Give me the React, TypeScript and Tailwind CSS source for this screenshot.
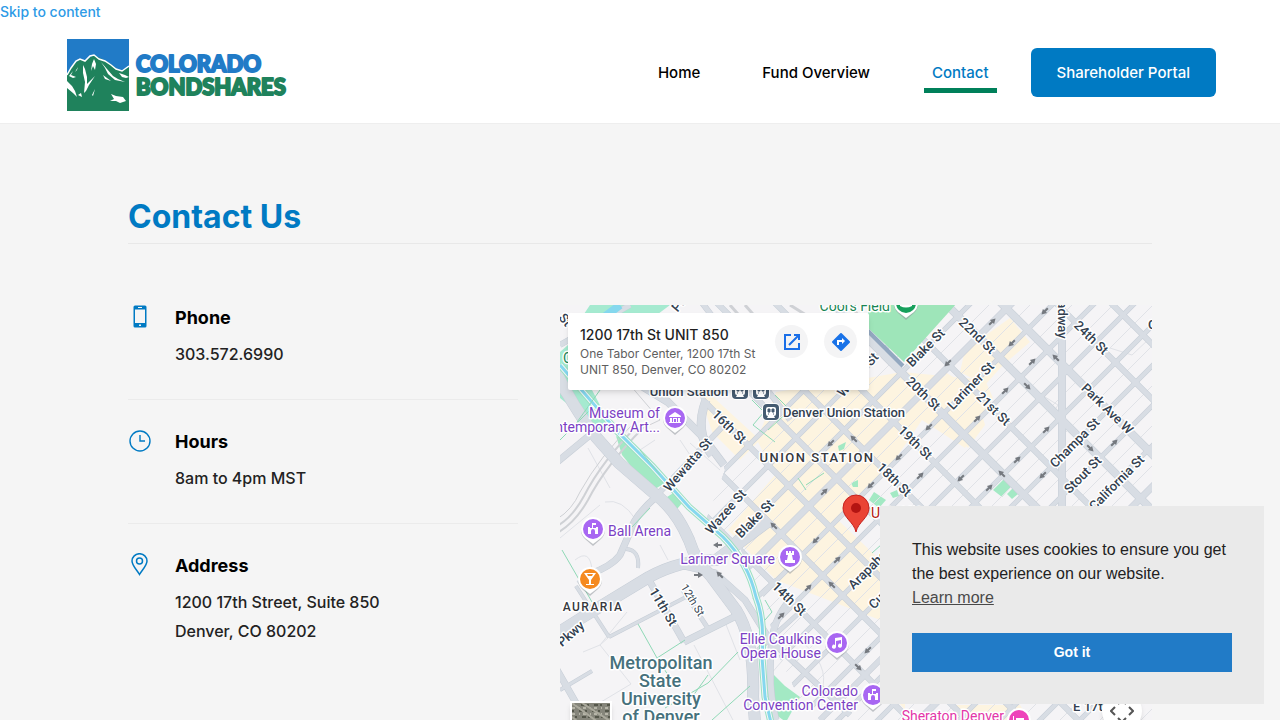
import { ReactNode } from "react";

type Line = { d: string; w: number };
type Label = {
  text: string;
  x: number;
  y: number;
  rotate?: number;
};

const BLUE = "#007ac3";

/* Numbered streets run down-right, named streets run up-right. */
const NUMBERED = [808, 753, 698, 642, 584, 529, 472, 414, 358, 303, 247, 190];
const NAMED = [
  1194, 1234, 1274, 1315, 1357, 1398, 1438, 1478, 1518, 1558, 1598, 1639, 1679,
  1720, 1760, 1800, 1841, 1881,
];
const WIDE = [698, 642, 529, 1315, 1639];

const CREEK =
  "M560 365 L616 430 L653 467 L689 507 L723 537 Q748 562 756 597 Q765 620 762 657 L765 697 L775 740";

const STREETS: Line[] = [
  { d: "M556 372 Q572 405 596 437 L619 463 L656 495 Q676 510 689 540 Q696 562 710 575 L736 610 Q755 640 753 697 L758 760", w: 11 },
  { d: "M560 388 L585 420 L619 463", w: 6 },
  { d: "M556 634 L583 617 L649 577 Q680 560 716 560 L770 520", w: 11 },
  { d: "M680 565 L715 573 L745 600 L776 650", w: 6 },
  { d: "M556 463 L596 430", w: 6 },
  { d: "M656 497 Q634 516 630 532 L620 555 Q612 566 590 574 L579 584", w: 6 },
  { d: "M626 549 Q640 550 638 568", w: 3 },
  { d: "M649 580 L684 642", w: 6 },
  { d: "M683 590 L709 630", w: 4 },
  { d: "M609 637 L686 597", w: 3 },
  { d: "M684 642 L740 614", w: 6 },
  { d: "M576 586 L609 637", w: 3 },
  { d: "M556 668 L580 710 L590 730", w: 6 },
  { d: "M560 690 L592 671", w: 3 },
  { d: "M632 380 L668 402 L703 437 L724 465", w: 7 },
  { d: "M706 400 Q694 432 712 455", w: 8 },
  { d: "M655 497 L724 425", w: 5 },
  { d: "M754 600 L776 580 M758 650 L800 612", w: 4 },
  { d: "M776 720 Q768 690 771 650 Q772 620 790 600", w: 6 },
  { d: "M770 640 L850 715 M820 720 L900 640", w: 5 },
  { d: "M1062 300 L1062 506", w: 7 },
  { d: "M630 305 L560 345 M700 300 L790 420", w: 5 },
];

const PARCELS =
  "M583 652 L600 645 L631 684 L596 705 M600 645 L609 637 M600 645 L627 612 M694 645 L735 724 M725 622 L740 660 M1110 348 L1132 355 L1150 338 M1045 397 L1058 405 L1052 414 M605 502 Q622 498 636 520 M575 560 Q590 548 592 570 M600 505 L560 538 M588 448 L610 488 M690 443 L720 470 M680 440 L690 455 M660 545 L668 560 M640 450 L655 440 M770 675 L800 640 M800 640 Q830 665 822 690";

const STREET_LABELS: Label[] = [
  { text: "22nd St", x: 977, y: 336, rotate: 44 },
  { text: "24th St", x: 1091, y: 338, rotate: 44 },
  { text: "21st St", x: 993, y: 409, rotate: 44 },
  { text: "20th St", x: 923, y: 394, rotate: 44 },
  { text: "19th St", x: 915, y: 443, rotate: 44 },
  { text: "18th St", x: 894, y: 480, rotate: 44 },
  { text: "16th St", x: 729, y: 427, rotate: 44 },
  { text: "14th St", x: 789, y: 599, rotate: 44 },
  { text: "11th St", x: 663, y: 607, rotate: 59 },
  { text: "Park Ave W", x: 1107, y: 409, rotate: 44 },
  { text: "Blake St", x: 926, y: 348, rotate: -45 },
  { text: "Larimer St", x: 971, y: 386, rotate: -46 },
  { text: "Champa St", x: 1075, y: 443, rotate: -45 },
  { text: "Stout St", x: 1083, y: 475, rotate: -45 },
  { text: "California St", x: 1117, y: 483, rotate: -45 },
  { text: "Wewatta St", x: 688, y: 465, rotate: -49 },
  { text: "Wazee St", x: 726, y: 512, rotate: -49 },
  { text: "Blake St", x: 755, y: 519, rotate: -45 },
  { text: "Arapahoe St", x: 876, y: 562, rotate: -45 },
  { text: "Curtis St", x: 889, y: 589, rotate: -45 },
  { text: "Wazee St", x: 858, y: 375, rotate: -48 },
  { text: "Pkwy", x: 571, y: 634, rotate: -41 },
  { text: "Broadway", x: 1062, y: 310, rotate: 90 },
  { text: "Park", x: 683, y: 300, rotate: -50 },
  { text: "St", x: 565, y: 320, rotate: 50 },
];

const ARROWS = [
  [1045, 311, 135], [992, 322, -45], [1012, 343, 135], [1056, 358, -135],
  [1032, 362, -45], [1027, 386, 45], [1005, 391, -45], [977, 419, -45],
  [1046, 430, -45], [1090, 448, 45], [1114, 443, -45], [1017, 460, -45],
  [1002, 474, -135], [961, 478, 135], [1043, 475, 135], [989, 488, -45],
  [831, 443, 135], [854, 439, -135], [899, 457, 135], [871, 485, 135],
  [920, 476, -45], [824, 492, -45], [774, 526, -135], [816, 540, 135],
  [837, 560, -45], [718, 545, 180], [698, 575, 0], [720, 575, -135],
  [808, 588, -45], [832, 585, -135], [781, 616, -45], [868, 650, 135],
  [858, 667, 45], [929, 427, 135], [948, 363, 135],
];

const TREES = [
  "M993 490 L1004 479 L1012 486 L1002 497Z",
  "M1007 494 L1013 488 L1018 494 L1012 499Z",
  "M869 500 L874 492 L886 500 L879 508Z",
  "M838 446 L846 442 L844 449 L839 451Z",
  "M851 483 L858 480 L858 487 L853 487Z",
  "M890 493 L897 490 L899 496 L893 498Z",
  "M616 436 L632 443 L665 483 L655 489 L643 481 L622 455Z",
  "M667 497 L675 492 L684 501 L677 509Z",
  "M774 675 L785 686 L800 697 L786 722 L772 712Z",
];

const MountainLogo = () => (
  <svg viewBox="0 0 232 76" className="h-[76px] w-[232px]" role="img" aria-label="Colorado BondShares">
    <rect x="3" y="3" width="62" height="72" fill="#217bc7" />
    <g transform="translate(1 1)">
      <path
        d="M2 37 L7 29 L15 22 L20 24 L29 18 L41 24 L47 28 L52 32 L57 34 L64 30 V74 H2Z"
        fill="#1f825c"
      />
      <path
        d="M2 38 L6 31 L11 24 L15 22 L20 24 L25 19 L29 18 L34 22 L40 24 L46 28 L51 32 L57 34 L64 29"
        fill="none"
        stroke="#fff"
        strokeWidth="1.500"
      />
      <g fill="#fff">
        <path d="M2 44 L7 49 L10 54 L12 60 L8 56 L2 51Z" />
        <path d="M18 28 L20 32 L22 40 L22 47 L30 39 L24 48 L21 54 L19 56 L20 45 L18 36Z" />
        <path d="M29 22 L31 27 L30 33 L28 29 L26 34 L27 27Z" />
        <path d="M36 25 L42 32 L48 39 L53 42 L60 45 L50 43 L43 37 L40 31Z" />
        <path d="M38 38 L46 44 L40 42Z" />
        <path d="M46 57 L51 59 L58 60 L61 64 L55 66 L51 64 L45 64 L49 62Z" />
        <path d="M8 34 L6 38 L11 40 L8 41 L4 39Z" />
        <path d="M13 58 L16 56 L17 60Z M27 58 L30 52 L28 59Z M13 30 L10 35 L12 33Z" />
        <path d="M54 36 L57 40 L61 41 L64 40 L60 38Z" />
      </g>
    </g>
    <g
      fontFamily="Lato, sans-serif"
      fontWeight="900"
      fontSize="22"
      strokeWidth="2"
      strokeLinejoin="round"
    >
      <text x="72" y="36" fill="#217bc7" stroke="#217bc7">COLORADO</text>
      <text x="72" y="59" fill="#1f825c" stroke="#1f825c">BONDSHARES</text>
    </g>
  </svg>
);

const PhoneIcon = () => (
  <svg viewBox="0 0 24 24" className="h-6 w-6" fill={BLUE} aria-hidden="true">
    <path
      fillRule="evenodd"
      d="M7 .5h10a1.500 1.500 0 0 1 1.500 1.500v19a1.500 1.500 0 0 1-1.500 1.500H7a1.500 1.500 0 0 1-1.500-1.500V2A1.500 1.500 0 0 1 7 .5ZM7 4.500v13.500h10V4.500ZM10 2v1h4v-1ZM11 19.500v1.500h2v-1.500Z"
    />
  </svg>
);

const ClockIcon = () => (
  <svg viewBox="0 0 24 24" className="h-6 w-6" fill="none" stroke={BLUE} strokeWidth="1.400" aria-hidden="true">
    <circle cx="12" cy="12" r="10" />
    <path d="M12 6v6h5" />
  </svg>
);

const PinIcon = () => (
  <svg viewBox="0 0 24 24" className="h-6 w-6" fill="none" stroke={BLUE} strokeWidth="1.500" aria-hidden="true">
    <path d="M11.500 21.500C9 17 4 12.500 4 8a7.500 7.300 0 0 1 15 0C19 12.500 14 17 11.500 21.500Z" />
    <circle cx="11.500" cy="8" r="3" />
  </svg>
);

const ContactItem = ({
  icon,
  title,
  children,
}: {
  icon: ReactNode;
  title: string;
  children: ReactNode;
}) => (
  <li className="flex gap-6 border-b border-[#ebebeb] pb-[30px] last:border-b-0">
    <div className="w-[23px] shrink-0">{icon}</div>
    <div>
      <h2 className="py-px text-lg leading-6 font-bold text-black">{title}</h2>
      <div className="mt-[9px] text-base leading-[29px] font-medium text-[#222]">{children}</div>
    </div>
  </li>
);

const Marker = ({
  x,
  y,
  color,
  children,
}: {
  x: number;
  y: number;
  color: string;
  children: ReactNode;
}) => (
  <g transform={`translate(${x} ${y})`}>
    <path d="M0 16 L-8 9 A12 12 0 1 1 8 9Z" fill="#8a8f96" opacity=".5" transform="translate(0 1)" />
    <path d="M0 15 L-8 9 A12 12 0 1 1 8 9Z" fill="#fff" />
    <circle r="10" fill={color} />
    <g fill="#fff">{children}</g>
  </g>
);

const Arena = () => (
  <path d="M-5 5 V-2 H-3 V-1 H-1 V-6 H3 V-4 H0 V-1 H3 V-2 H5 V5 H2 V2 A2 2 0 0 0 -2 2 V5Z" />
);

const Transit = ({ x, y }: { x: number; y: number }) => (
  <g transform={`translate(${x} ${y})`}>
    <rect x="-9" y="-9" width="18" height="18" rx="5" fill="#fff" />
    <rect x="-8" y="-8" width="16" height="16" rx="4" fill="#455b71" />
    <path d="M-3 -5 H3 Q5 -5 5 -3 V2 Q5 4 3 4 L4 6 H-4 L-3 4 Q-5 4 -5 2 V-3 Q-5 -5 -3 -5Z" fill="#fff" />
    <path d="M-3 -3 H-1 V0 H-3Z M1 -3 H3 V0 H1Z M-3 2 H-2 M2 2 H3" fill="#455b71" stroke="#455b71" />
  </g>
);

const CityMap = () => (
  <svg
    viewBox="560 305 592 450"
    preserveAspectRatio="xMinYMin slice"
    className="block h-full w-full"
    fontFamily="Roboto, sans-serif"
    role="img"
    aria-label="Map of downtown Denver"
  >
    <defs>
      <clipPath id="downtown">
        <path d="M560 305 L640 305 L700 396 L725 470 L706 520 L740 548 L765 600 L776 650 L800 700 L860 756 H1152 V305Z" />
      </clipPath>
      <clipPath id="east">
        <path d="M700 305 H1152 V755 H700Z" />
      </clipPath>
    </defs>

    <rect x="560" y="305" width="592" height="450" fill="#f5f4f6" />

    {/* Commercial blocks */}
    <g clipPath="url(#downtown)" fill="#fdf4e0">
      <path d="M776 392 L868 378 L902 372 L985 380 L993 398 L965 448 L922 420 L888 470 L852 500 L838 520 L880 560 L880 620 L776 580 L728 530 L775 475 L757 440Z" />
      <path d="M965 350 L1010 318 L1030 342 L1003 365 L985 385 L960 372Z M945 372 L975 390 L985 425 L968 448 L950 430Z" />
      <path d="M560 305 H600 L570 345Z M700 385 L760 440 L740 460 L690 410Z" />
      <path d="M880 620 H905 V710 L880 680Z M955 705 H1020 L1050 755 H940Z" />
    </g>

    {/* Parks */}
    <path d="M560 352 L568 345 V390 H592 L612 428 L602 432 L560 398Z M590 305 H670 L650 320 H580Z" fill="#a5ead0" />
    {TREES.map((d) => (
      <path key={d} d={d} fill="#a3e9c4" />
    ))}

    {/* Parcel lines */}
    <g fill="none" stroke="#e0e2e7" strokeWidth="1">
      <g clipPath="url(#downtown)">
        {NAMED.map((n) => (
          <path key={n} d={`M${n + 20 - 800} 800 L${n + 20 - 300} 300`} />
        ))}
      </g>
      <path d={PARCELS} />
    </g>

    {/* Rail lines */}
    <g fill="none" stroke="#cfd1d5">
      <path d="M643 428 Q606 465 588 500 Q575 523 557 533" strokeWidth="2" />
      <path d="M638 425 Q602 461 584 496 Q572 518 557 526" strokeWidth="2" />
      <path d="M633 424 Q600 456 580 492 Q572 510 557 519 M630 385 L660 420 L643 428" strokeWidth="1" />
      <path d="M730 305 L765 345 M745 305 L780 345 M790 305 L830 330 M850 305 L862 320" strokeWidth="3" />
    </g>

    {/* Streets, a darker casing first and the fill over it */}
    {[
      { color: "#c6cdd6", extra: 1 },
      { color: "#d8dde4", extra: 0 },
    ].map(({ color, extra }) => (
      <g key={color} fill="none" stroke={color} strokeLinejoin="round">
        <g clipPath="url(#downtown)">
          {NAMED.map((n) => (
            <path
              key={n}
              d={`M${n - 800} 800 L${n - 300} 300`}
              strokeWidth={(WIDE.includes(n) ? 6 : 4) + extra}
            />
          ))}
          {NUMBERED.map((n) => (
            <path
              key={n}
              d={`M${300 + n} 300 L${800 + n} 800`}
              strokeWidth={(WIDE.includes(n) ? 7 : 5) + extra}
              clipPath="url(#east)"
            />
          ))}
        </g>
        {STREETS.map(({ d, w }) => (
          <path key={d} d={d} strokeWidth={w + extra} />
        ))}
      </g>
    ))}

    {/* Ballpark covers the streets that stop at its edge */}
    <path d="M868 303 H957 L904 362 L868 328Z" fill="#9ee5b9" />
    <path d="M867 330 L903 366" stroke="#93a8c0" strokeWidth="4" />

    {/* Cherry Creek and the trails */}
    <g fill="none">
      <path d={CREEK} stroke="#9be0c1" strokeWidth="7" />
      <path d={CREEK} stroke="#f3f6f7" strokeWidth="5" />
      <path d={CREEK} stroke="#85d8ee" strokeWidth="3" />
      <path d="M603 318 L620 305" stroke="#85d8ee" strokeWidth="8" />
      <path
        d="M638 624 L657 658 L685 640 M657 658 L668 675 M665 708 L708 683 L738 652 M708 675 L690 700 M712 720 L750 686 M640 450 L660 475 M632 527 L650 508 M562 550 L592 602 M752 400 L764 412 L753 425 L775 442 M775 395 L790 410 L768 430 M798 478 L806 490 M806 485 L824 473 M872 553 L882 544 M765 600 L772 612 L765 620 M600 390 L575 425 M560 440 L590 410"
        stroke="#8fd9b6"
        strokeWidth="1"
      />
    </g>

    {/* One-way arrows */}
    {ARROWS.map(([x, y, angle]) => (
      <path
        key={`${x}-${y}`}
        d="M-4 -1 H0 V-3 L5 0 L0 3 V1 H-4Z"
        fill="#75797f"
        transform={`translate(${x} ${y}) rotate(${angle})`}
      />
    ))}

    {/* Street names */}
    <g
      fill="#333f50"
      stroke="#fff"
      strokeWidth="3"
      strokeLinejoin="round"
      paintOrder="stroke"
      textAnchor="middle"
      fontSize="13"
      fontWeight="500"
    >
      {STREET_LABELS.map(({ text, x, y, rotate = 0 }) => (
        <text key={`${text}-${x}`} x={x} y={y} dy="4" transform={`rotate(${rotate} ${x} ${y})`}>
          {text}
        </text>
      ))}
      <text x="693" y="600" dy="4" fontSize="11" fontWeight="400" transform="rotate(59 693 600)">12th St</text>
      <text x="1104" y="711">E 17th Ave</text>
      <text x="1148" y="329" textAnchor="start">C</text>
      <text x="817" y="462" letterSpacing="1.500" fill="#36383d">UNION STATION</text>
      <text x="593" y="611" fontSize="12" letterSpacing="1.500" fill="#36383d">AURARIA</text>
      <text x="689" y="396">Union Station</text>
      <text x="844" y="417">Denver Union Station</text>
    </g>

    {/* Places */}
    <g
      fill="#7b3fc4"
      stroke="#fff"
      strokeWidth="3"
      strokeLinejoin="round"
      paintOrder="stroke"
      textAnchor="end"
      fontSize="14"
    >
      <text x="660" y="418">Museum of</text>
      <text x="660" y="432">Contemporary Art...</text>
      <text x="608" y="536" textAnchor="start">Ball Arena</text>
      <text x="775" y="564">Larimer Square</text>
      <text x="822" y="644">Ellie Caulkins</text>
      <text x="821" y="658">Opera House</text>
      <text x="858" y="696">Colorado</text>
      <text x="858" y="710">Convention Center</text>
      <text x="1004" y="721" fill="#e336a8">Sheraton Denver</text>
      <text x="890" y="311" fill="#188554">Coors Field</text>
      <text x="563" y="363" textAnchor="start" fill="#188554">C</text>
      <text x="871" y="518" textAnchor="start" fill="#b3140e">Unit 850</text>
    </g>
    <g
      fill="#46717c"
      stroke="#fff"
      strokeWidth="3"
      strokeLinejoin="round"
      paintOrder="stroke"
      textAnchor="middle"
      fontSize="18"
      fontWeight="500"
    >
      <text x="661" y="669">Metropolitan</text>
      <text x="660" y="687">State</text>
      <text x="661" y="705">University</text>
      <text x="661" y="723">of Denver</text>
    </g>

    <Marker x={675} y={418} color="#a867f2">
      <path d="M-6 -2 L0 -6 L6 -2 V-1 H-6Z M-5 0 H-3 V4 H-5Z M3 0 H5 V4 H3Z M-6 4 H6 V5 H-6Z M-2 4 V0 H2 V4 H1 V1 H-1 V4Z" />
    </Marker>
    <Marker x={593} y={529} color="#a867f2">
      <Arena />
    </Marker>
    <Marker x={790} y={557} color="#a867f2">
      <path d="M-4 -6 H-2 V-4 H-1 V-6 H1 V-4 H2 V-6 H4 V-2 H2 L3 3 H5 V6 H-5 V3 H-3 L-2 -2 H-4Z" />
    </Marker>
    <Marker x={837} y={643} color="#a867f2">
      <path d="M-2 -5 L5 -6 V3 A2 2 0 1 1 4 1 V-3 L-1 -2 V4 A2 2 0 1 1 -2 2Z" />
    </Marker>
    <Marker x={873} y={695} color="#a867f2">
      <Arena />
    </Marker>
    <Marker x={590} y={579} color="#f58a20">
      <path fillRule="evenodd" d="M-6 -6 H6 L1 1 V5 H4 V6 H-4 V5 H-1 V1Z M-3 -5 L-2 -3 H2 L3 -5Z" />
    </Marker>
    <Marker x={906} y={303} color="#17a05c">
      <path d="M-6 -1 H6 V3 Q0 6 -6 3Z" />
    </Marker>
    <Marker x={1019} y={720} color="#ee43ba">
      <path d="M-6 -4 H-5 V1 H6 V4 H-6Z M-3 -2 H5 V0 H-3Z" />
    </Marker>
    <Transit x={771} y={412} />
    <Transit x={740} y={391} />
    <Transit x={761} y={391} />

    {/* Destination pin */}
    <path
      d="M856 532 C854 522 843 518 843 508 A13 13 0 0 1 869 508 C869 518 858 522 856 532Z"
      fill="#ea4335"
      stroke="#c5221f"
      strokeWidth="1"
    />
    <circle cx="856" cy="508" r="5" fill="#b31412" />
  </svg>
);

const MapCard = () => (
  <div className="absolute top-2 left-2 flex w-[301px] justify-between rounded-xs bg-white p-3 shadow-md">
    <div>
      <div className="pb-px text-sm leading-5 font-medium text-[#1f1f1f]">1200 17th St UNIT 850</div>
      <address className="text-xs leading-4 text-[#5e5e5e] not-italic">
        One Tabor Center, 1200 17th St
        <br />
        UNIT 850, Denver, CO 80202
      </address>
    </div>
    <div className="flex gap-4">
      <a href="#open" aria-label="Open in Maps" className="flex h-[33px] w-[33px] items-center justify-center rounded-full bg-[#f4f4f5]">
        <svg viewBox="0 0 20 20" className="h-5 w-5" fill="none" stroke="#1a6fe8" strokeWidth="2">
          <path d="M9 3H3V17H17V11M12 3H17V8M17 3L7 13" />
        </svg>
      </a>
      <a href="#directions" aria-label="Directions" className="flex h-[33px] w-[33px] items-center justify-center rounded-full bg-[#f4f4f5]">
        <svg viewBox="0 0 20 20" className="h-5 w-5">
          <path d="M10 2L18 10L10 18L2 10Z" fill="#1a73e8" stroke="#1a73e8" strokeWidth="2" strokeLinejoin="round" />
          <path d="M7 13V9H11" fill="none" stroke="#fff" strokeWidth="2" />
          <path d="M11 6L14 9L11 12Z" fill="#fff" />
        </svg>
      </a>
    </div>
  </div>
);

const MapPanel = () => (
  <div className="relative h-[450px] flex-1 overflow-hidden">
    <CityMap />
    <MapCard />
    <button
      type="button"
      aria-label="Show satellite imagery"
      className="absolute bottom-3 left-[10px] h-[42px] w-[42px] overflow-hidden border-2 border-white shadow-md"
    >
      <svg viewBox="0 0 38 38" className="h-full w-full">
        <rect width="38" height="38" fill="#85857a" />
        <path d="M0 5H38M0 11H38M0 18H38M0 26H38" stroke="#b7b6a9" strokeWidth="2" strokeDasharray="3 4 1 3" />
        <path d="M2 2H38M0 8H38M3 14H38M1 22H38" stroke="#55574b" strokeWidth="2" strokeDasharray="2 5 4 2" />
        <path d="M0 0L38 28M10 0L38 18M0 14L30 38" stroke="#aaa99c" strokeWidth="2" />
      </svg>
    </button>
    <button
      type="button"
      aria-label="Map camera controls"
      className="absolute right-[10px] bottom-6 flex h-10 w-10 items-center justify-center rounded-full bg-white shadow-md"
    >
      <svg viewBox="0 0 24 24" className="h-6 w-6" fill="none" stroke="#555" strokeWidth="2">
        <path d="M5 8L1 12L5 16M19 8L23 12L19 16M8 5L12 1L16 5M8 19L12 23L16 19" />
      </svg>
    </button>
  </div>
);

const CookieNotice = () => (
  <div
    role="dialog"
    aria-label="Cookie consent"
    className="fixed right-4 bottom-4 flex w-96 flex-col gap-[23px] bg-[#eaeaea] p-8 font-['Liberation_Sans',sans-serif] text-base leading-6 text-[#222]"
  >
    <p>
      This website uses cookies to ensure you get the best experience on our website.
      <br />
      <a href="#privacy" className="underline opacity-80">
        Learn more
      </a>
    </p>
    <button type="button" className="bg-[#217bc7] py-2 text-sm leading-[23px] font-bold text-white">
      Got it
    </button>
  </div>
);

const Header = () => (
  <header className="flex items-start justify-between border-b border-[#eee] bg-white px-16 pb-[11px]">
    <a href="#home" className="pt-3">
      <MountainLogo />
    </a>
    <nav className="flex items-center gap-[46px] pt-6 text-[15px] leading-5 font-medium text-black">
      <a href="#home" className="px-2">
        Home
      </a>
      <a href="#fund" className="px-2">
        Fund Overview
      </a>
      <div className="flex items-center gap-[34px]">
        <a href="#contact" aria-current="page" className="border-y-[5px] border-t-transparent border-b-[#00805a] px-2 py-[5px] text-[#007ac3]">
          Contact
        </a>
        <a href="#portal" className="rounded-md bg-[#007ac3] px-[26px] py-[14px] leading-[21px] text-white">
          Shareholder Portal
        </a>
      </div>
    </nav>
  </header>
);

export default function App() {
  return (
    <div className="h-screen overflow-hidden bg-[#f5f5f5] font-['Inter',sans-serif]">
      <div className="bg-white text-sm leading-6 font-medium">
        <a href="#content" className="text-[#2e9be6]">
          Skip to content
        </a>
      </div>
      <Header />
      <main id="content" className="mx-auto w-4/5 pt-[70px]">
        <h1 className="border-b border-[#e8e8e8] pb-1 text-[32px] leading-[45px] font-bold text-[#007ac3]">
          Contact Us
        </h1>
        <div className="flex gap-[42px] pt-[61px]">
          <ul className="flex w-[390px] shrink-0 flex-col gap-[29px]">
            <ContactItem icon={<PhoneIcon />} title="Phone">
              303.572.6990
            </ContactItem>
            <ContactItem icon={<ClockIcon />} title="Hours">
              8am to 4pm MST
            </ContactItem>
            <ContactItem icon={<PinIcon />} title="Address">
              1200 17th Street, Suite 850
              <br />
              Denver, CO 80202
            </ContactItem>
          </ul>
          <MapPanel />
        </div>
      </main>
      <CookieNotice />
    </div>
  );
}
